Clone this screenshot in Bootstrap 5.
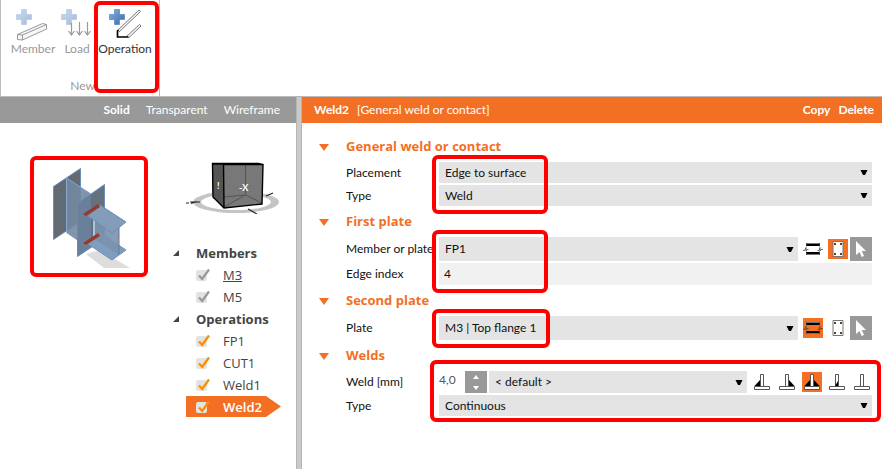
<!DOCTYPE html>
<html lang="en">
<head>
<meta charset="utf-8">
<meta name="viewport" content="width=device-width, initial-scale=1">
<title>Weld2 – General weld or contact</title>
<link href="https://cdn.jsdelivr.net/npm/bootstrap@5.3.0/dist/css/bootstrap.min.css" rel="stylesheet">
<style>
:root { --accent: #f36f24; --bar: #999; --field: #e4e4e4; --ink: #111; }
body { font-family: Lato, "Noto Sans", sans-serif; font-size: 12px; line-height: 16px; color: var(--ink); background: #fff; }
button { border: 0; padding: 0; background: none; color: inherit; }
svg { display: block; flex: none; }
.ribbon { height: 96px; }
.ribbon-group { border: solid #bbb; border-width: 0 1px; width: 160px; padding: 8px 4px 2px 9px; color: #999; }
.ribbon-group button { width: 46px; }
.ribbon-group .tool-load { width: 32px; margin-left: 5px; }
.ribbon-group .tool-op { width: 56px; color: #333; margin-left: 4px; }
.ribbon-group button span { display: block; margin: 0 -8px; line-height: 16px; }
.ring { position: absolute; border: 4px solid #f00; border-radius: 6px; pointer-events: none; z-index: 2; }
.ring-op { left: 94px; top: 1px; width: 65px; height: 92px; }
.ring-view { inset: 0; }
.ring-fields { left: -7px; top: -7px; width: 116px; bottom: -8px; }
.ring-plate { left: -7px; top: -7px; width: 118px; bottom: -8px; }
.ring-welds { left: -9px; right: -9px; top: -11px; bottom: -6px; }
.view-pane { width: 296px; }
.bar-head { height: 27px; padding-bottom: 1px; border-top: 1px solid #bbb; background: var(--bar); color: #fff; }
.bar-head.orange { background: var(--accent); }
.modes { gap: 16px; }
.splitter { width: 6px; background: #cacaca; border: solid #b5b5b5; border-width: 1px 1px 0; }
.view-box { width: 118px; height: 121px; margin: 33px 0 0 30px; padding: 8px; }
.tree-col { width: 124px; margin-top: 35px; }
.cube { margin: 0 0 28px 14px; }
.tree { font-family: "Open Sans", "Noto Sans", sans-serif; font-size: 13px; line-height: 22px; color: #444; margin: 0; }
.tree-row { height: 22px; display: flex; align-items: center; padding-left: 24px; }
.tree-head { padding-left: 1px; font-weight: 700; gap: 17px; }
.tree-row label { display: flex; align-items: center; gap: 13px; }
.tick { appearance: none; width: 11px; height: 11px; margin: 0; background: #e3e3e3; border-radius: 2px; }
.tick-box { display: grid; width: 14px; height: 14px; color: #ff8c00; }
.tick-box.muted { color: #999; }
.tick-box > * { grid-area: 1 / 1; }
.tick-box .tick { align-self: end; margin-bottom: 1px; }
.selected { margin-left: 14px; padding-left: 10px; width: 95px; height: 21px; background: var(--accent); color: #fff; font-weight: 600; clip-path: polygon(0 0, 80px 0, 100% 50%, 80px 100%, 0 100%); }
.form-body { padding: 9px 10px 20px 16px; }
.sec-head { height: 30px; display: flex; align-items: center; gap: 17px; margin: 0 0 0 1px; font-family: "Open Sans", "Noto Sans", sans-serif; font-size: 13px; font-weight: 700; color: var(--accent); }
.sec-rows { display: flex; flex-direction: column; gap: 2px; margin: 0 0 1px 28px; position: relative; }
.prop { display: grid; grid-template-columns: 90px minmax(0, 1fr); column-gap: 3px; align-items: center; min-height: 21px; }
.prop > label { white-space: nowrap; }
.prop.mid { min-height: 22px; }
.prop.tall { min-height: 24px; }
.control { display: flex; align-items: stretch; align-self: stretch; }
.drop { display: grid; flex: 1; background: var(--field); min-width: 0; }
.drop > * { grid-area: 1 / 1; }
.drop select { appearance: none; border: 0; background: transparent; padding: 0 24px 0 6px; color: inherit; width: 100%; font-size: 12px; }
.drop svg { justify-self: end; align-self: center; margin-right: 4px; pointer-events: none; }
.plain { border: 0; background: #f1f1f1; padding: 0 5px; color: inherit; width: 100%; }
.amount { border: 0; background: none; padding: 0 0 4px; width: 26px; color: #555; }
.spin { width: 22px; background: var(--bar); margin-right: 2px; }
.tools { display: flex; align-items: center; gap: 5px; margin-left: 5px; }
.sq { width: 20px; height: 20px; }
.sq.on { background: var(--accent); }
.pick { width: 22px; background: var(--bar); margin-left: 2px; }
.anchor-fields { position: absolute; left: 93px; right: 0; top: 0; bottom: 0; pointer-events: none; }
</style>
<script src="https://cdn.jsdelivr.net/npm/bootstrap@5.3.0/dist/js/bootstrap.bundle.min.js"></script>
</head>
<body class="d-flex flex-column min-vh-100">
<svg width="0" height="0" class="position-absolute" aria-hidden="true">
  <defs>
    <linearGradient id="blue" x1="0" y1="0" x2="1" y2="1"><stop offset="0" stop-color="#8db2df"/><stop offset="1" stop-color="#3567a8"/></linearGradient>
    <symbol id="plus" viewBox="0 0 16 16"><path d="M5.500.5h5v5h5v5h-5v5h-5v-5h-5v-5h5z" fill="url(#blue)" stroke="#5585c0" stroke-width=".7"/></symbol>
    <symbol id="caret" viewBox="0 0 8 7"><path d="M.5 1h7L5 6H3z" fill="#000"/></symbol>
    <symbol id="fold" viewBox="0 0 10 7"><path d="M0 0h10L5 7z" fill="#f36f24"/></symbol>
    <symbol id="open" viewBox="0 0 6 6"><path d="M6 0v6H0z" fill="#444"/></symbol>
    <symbol id="check" viewBox="0 0 14 14"><path d="M3 7.500 6.200 11 13 1.500" fill="none" stroke="currentColor" stroke-width="2.300"/></symbol>
    <symbol id="beam" viewBox="0 0 20 20"><path d="M3 4.500h14M3 15.500h14" stroke="#777"/><path d="M3 6h14M3 14h14" stroke="#000" stroke-width="2"/><path d="M3.500 4v3.500M3.500 12.500V16M0 11.500h1.500L3 8.500v3.500l1-1.500h1.500M16.500 4v3.500M16.500 12.500V16M14.500 11.500H16l1-3V12l1-1.500h2" fill="none" stroke="#444" stroke-width=".8"/></symbol>
    <symbol id="plate" viewBox="0 0 20 20"><path d="M5 2.500h10v15H5z" fill="#fff" stroke="#777"/><path d="M6 4h2v2H6zM12 4h2v2h-2zM6 14h2v2H6zM12 14h2v2h-2z" fill="#653c2d"/></symbol>
    <symbol id="arrow" viewBox="0 0 22 24"><path d="M6 4v14l3.500-3 2.200 5 2.300-1-2.200-5H16z" fill="#fff"/></symbol>
    <symbol id="tee" viewBox="0 0 20 20"><path d="M8.500 2.500h3v12h-3zM2.500 14.500h15v3h-15z" fill="#fff" stroke="#555"/></symbol>
    <symbol id="fillL" viewBox="0 0 20 20"><path d="M8 8v6H2.500z"/></symbol>
    <symbol id="fillR" viewBox="0 0 20 20"><path d="M12 8v6h5.500z"/></symbol>
  </defs>
</svg>

<header class="ribbon position-relative">
  <div class="ribbon-group h-100 d-flex flex-column">
    <div class="d-flex">
      <button type="button"><svg class="mx-auto" width="34" height="33" viewBox="0 0 34 33"><use href="#plus" x="0" y="1" width="16" height="16" opacity=".45"/><path d="M1.500 26.500 26.500 15.500l4 1v4.500l-24 11-5-.5zM1.500 26.500l5 .5v5M6.500 27l24-10.500" fill="#f6f6f6" stroke="#999"/></svg><span>Member</span></button>
      <button type="button" class="tool-load"><svg width="34" height="33" viewBox="0 0 34 33"><use href="#plus" x="0" y="1" width="16" height="16" opacity=".45"/><path d="M10.500 15v12M18.500 14v13M26.500 14v13M7.500 23l3 4 3-4M15.500 23l3 4 3-4M23.500 23l3 4 3-4" fill="none" stroke="#999" stroke-width="1.200"/></svg><span>Load</span></button>
      <button type="button" class="tool-op"><svg class="mx-auto" width="36" height="33" viewBox="0 0 36 33"><use href="#plus" x="2" y="1" width="16" height="16"/><path d="m10 23 22-21 1.500 1.500L12 24M19 29l13.500-12.500L34 18 21.500 30" fill="#f7f7f7" stroke="#777"/><path d="m11.500 22-1 1v6h11" fill="none" stroke="#000" stroke-width="1.700"/></svg><span>Operation</span></button>
    </div>
    <div class="mt-auto text-center">New</div>
  </div>
  <div class="ring ring-op"></div>
</header>

<div class="d-flex flex-grow-1">
  <section class="view-pane flex-shrink-0">
    <div class="bar-head modes d-flex align-items-center justify-content-end px-3">
      <button type="button" class="fw-bold">Solid</button><button type="button">Transparent</button><button type="button">Wireframe</button>
    </div>
    <div class="d-flex">
      <div class="view-box position-relative">
        <svg width="102" height="105" viewBox="0 0 102 105">
          <path d="M48 90 62 86 92 104H66z" fill="#ddd"/>
          <path d="M15.500 22.500 42.500 4.500v53l-27 18z" fill="#636b72" stroke="#6c8fb9"/>
          <path d="M28.500 14.500 52 29v56L28.500 69z" fill="#7288a2" opacity=".9"/>
          <path d="M28.500 14.500v54M28.500 14 53 30" fill="none" stroke="#86a8d2"/>
          <path d="M39.500 39.500 66.500 20.500v54l-27 18z" fill="#65717d" stroke="#6c8fb9"/>
          <path d="M39.500 40 53 31v52l-13.500 9z" fill="#6c83a0" opacity=".8"/>
          <path d="m50 80 12-11 26 17-14 10z" fill="#7f9dbf" stroke="#6c8fb9"/>
          <path d="M56 46 81 62v29L56 75z" fill="#7c93ae" opacity=".92"/>
          <path d="M81 62v28" stroke="#607b9c"/><path d="M56 47v28" stroke="#aac4e4" stroke-width="2"/>
          <path d="m50 52 12-11 26 17-14 11z" fill="#829cba" stroke="#6c8fb9"/>
          <path d="m45 50 15-10 2 3-14 9zM45 79l15-10 2 3-14 9z" fill="#963b2c"/>
        </svg>
        <div class="ring ring-view"></div>
      </div>
      <nav class="tree-col ms-4">
        <svg class="cube" width="98" height="56" viewBox="0 0 98 56">
          <path fill-rule="evenodd" d="M7 44a43 11 0 1 0 86 0a43 11 0 1 0-86 0zM15 44a35 8 0 1 0 70 0a35 8 0 1 0-70 0z" fill="#c4c4c4"/>
          <path d="M26 6h51l-1 40-38 4-11-11z" fill="#787878"/><path d="M26 6h11l1 44-11-11z" fill="#555"/>
          <path d="M59.500 6v31M27 40l32.500-3L76 45M59.500 37 38 49" fill="none" stroke="#555"/>
          <path d="M26.500 5.500h46l4.500 1-1 39.500-38 4-11-11zM26.500 6h11l.5 43.500M37.500 6.500h40" fill="none" stroke="#000" stroke-width="1.400"/>
          <path d="M0 45h3M4 44h10M5 45.500l6-2M62 51l9 5M80 38l7-3" stroke="#222" stroke-width="1.200"/>
          <text x="53" y="33" font-size="9" font-weight="700" fill="#fff">-X</text><text x="31" y="31" font-size="9" font-weight="700" fill="#fff">!</text>
        </svg>
        <ul class="tree list-unstyled">
          <li class="tree-row tree-head"><svg width="6" height="6"><use href="#open"/></svg>Members</li>
          <li class="tree-row"><label><span class="tick-box muted"><input class="tick" type="checkbox" checked><svg width="14" height="14"><use href="#check"/></svg></span><u>M3</u></label></li>
          <li class="tree-row"><label><span class="tick-box muted"><input class="tick" type="checkbox" checked><svg width="14" height="14"><use href="#check"/></svg></span>M5</label></li>
          <li class="tree-row tree-head"><svg width="6" height="6"><use href="#open"/></svg>Operations</li>
          <li class="tree-row"><label><span class="tick-box"><input class="tick" type="checkbox" checked><svg width="14" height="14"><use href="#check"/></svg></span>FP1</label></li>
          <li class="tree-row"><label><span class="tick-box"><input class="tick" type="checkbox" checked><svg width="14" height="14"><use href="#check"/></svg></span>CUT1</label></li>
          <li class="tree-row"><label><span class="tick-box"><input class="tick" type="checkbox" checked><svg width="14" height="14"><use href="#check"/></svg></span>Weld1</label></li>
          <li class="tree-row selected"><label><span class="tick-box"><input class="tick" type="checkbox" checked><svg width="14" height="14"><use href="#check"/></svg></span>Weld2</label></li>
        </ul>
      </nav>
    </div>
  </section>
  <div class="splitter flex-shrink-0"></div>
  <main class="flex-grow-1">
    <div class="bar-head orange d-flex align-items-center ps-2 pe-2">
      <span class="fw-bold ms-1 me-2">Weld2</span><span>[General weld or contact]</span>
      <button type="button" class="fw-bold ms-auto">Copy</button><button type="button" class="fw-bold ms-2">Delete</button>
    </div>
    <form class="form-body">
      <h2 class="sec-head"><svg width="10" height="7"><use href="#fold"/></svg>General weld or contact</h2>
      <div class="sec-rows">
        <div class="prop"><label for="placement">Placement</label><div class="control"><div class="drop"><select id="placement"><option>Edge to surface</option></select><svg width="8" height="7"><use href="#caret"/></svg></div></div></div>
        <div class="prop"><label for="kind">Type</label><div class="control"><div class="drop"><select id="kind"><option>Weld</option></select><svg width="8" height="7"><use href="#caret"/></svg></div></div></div>
        <div class="anchor-fields"><div class="ring ring-fields"></div></div>
      </div>
      <h2 class="sec-head"><svg width="10" height="7"><use href="#fold"/></svg>First plate</h2>
      <div class="sec-rows">
        <div class="prop tall"><label for="first">Member or plate</label><div class="control"><div class="drop"><select id="first"><option>FP1</option></select><svg width="8" height="7"><use href="#caret"/></svg></div>
          <div class="tools"><button type="button" class="sq" aria-label="Member"><svg width="20" height="20"><use href="#beam"/></svg></button><button type="button" class="sq on" aria-label="Plate"><svg width="20" height="20"><use href="#plate"/></svg></button></div><button type="button" class="pick" aria-label="Pick"><svg width="22" height="24"><use href="#arrow"/></svg></button></div></div>
        <div class="prop mid"><label for="edge">Edge index</label><div class="control"><input id="edge" class="plain" type="text" value="4"></div></div>
        <div class="anchor-fields"><div class="ring ring-fields"></div></div>
      </div>
      <h2 class="sec-head"><svg width="10" height="7"><use href="#fold"/></svg>Second plate</h2>
      <div class="sec-rows">
        <div class="prop tall"><label for="second">Plate</label><div class="control"><div class="drop"><select id="second"><option>M3 | Top flange 1</option></select><svg width="8" height="7"><use href="#caret"/></svg></div>
          <div class="tools"><button type="button" class="sq on" aria-label="Member"><svg width="20" height="20"><use href="#beam"/></svg></button><button type="button" class="sq" aria-label="Plate"><svg width="20" height="20"><use href="#plate"/></svg></button></div><button type="button" class="pick" aria-label="Pick"><svg width="22" height="24"><use href="#arrow"/></svg></button></div></div>
        <div class="anchor-fields"><div class="ring ring-plate"></div></div>
      </div>
      <h2 class="sec-head"><svg width="10" height="7"><use href="#fold"/></svg>Welds</h2>
      <div class="sec-rows">
        <div class="prop mid"><label for="size">Weld [mm]</label><div class="control">
          <input id="size" class="amount" type="text" value="4,0"><button type="button" class="spin" aria-label="Step"><svg width="22" height="22" viewBox="0 0 22 22"><path d="m8 8 3-4 3 4zM8 15l3 4 3-4z" fill="#fff"/></svg></button>
          <div class="drop"><select aria-label="Weld material"><option>&lt; default &gt;</option></select><svg width="8" height="7"><use href="#caret"/></svg></div>
          <div class="tools">
            <button type="button" class="sq" aria-label="Left fillet"><svg width="20" height="20"><use href="#tee"/><use href="#fillL"/></svg></button>
            <button type="button" class="sq" aria-label="Right fillet"><svg width="20" height="20"><use href="#tee"/><use href="#fillR"/></svg></button>
            <button type="button" class="sq on" aria-label="Double fillet"><svg width="20" height="20"><use href="#tee"/><use href="#fillL"/><use href="#fillR"/></svg></button>
            <button type="button" class="sq" aria-label="Bevel"><svg width="20" height="20"><use href="#tee"/><path d="M11 9v5H8z"/></svg></button>
            <button type="button" class="sq" aria-label="Contact"><svg width="20" height="20"><use href="#tee"/></svg></button>
          </div></div></div>
        <div class="prop"><label for="run">Type</label><div class="control"><div class="drop"><select id="run"><option>Continuous</option></select><svg width="8" height="7"><use href="#caret"/></svg></div></div></div>
        <div class="anchor-fields"><div class="ring ring-welds"></div></div>
      </div>
    </form>
  </main>
</div>
</body>
</html>
